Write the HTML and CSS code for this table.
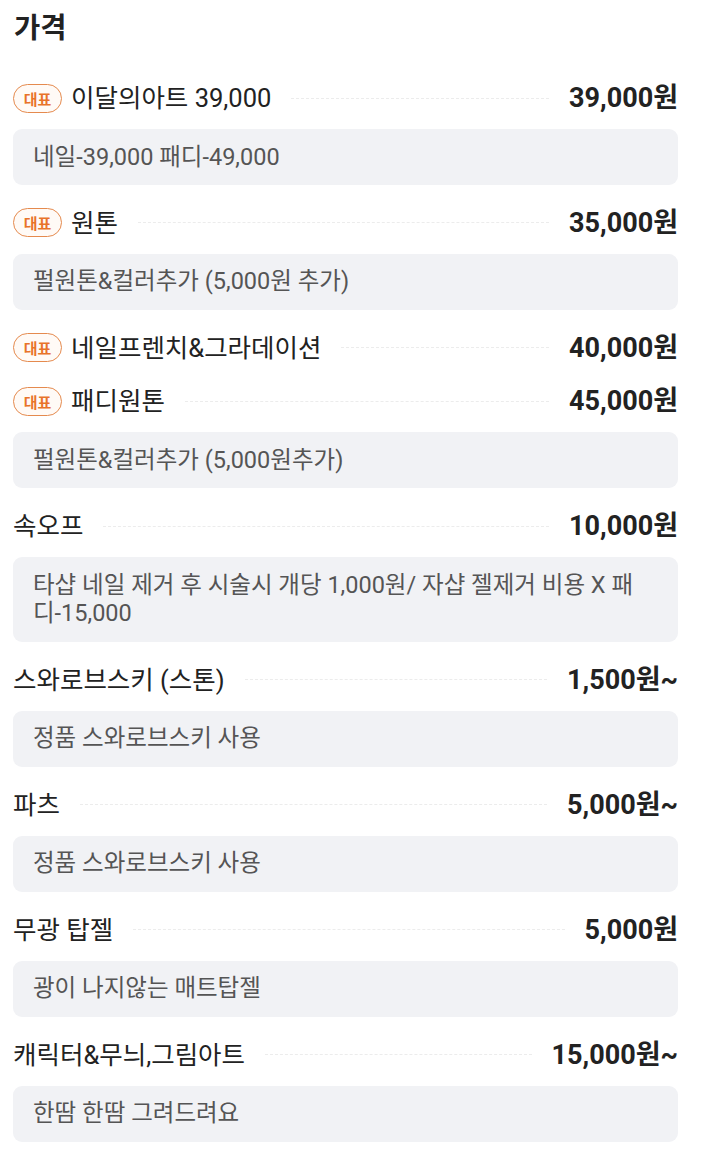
FILE: index.html
```html
<!DOCTYPE html>
<html lang="ko">
<head>
<meta charset="utf-8">
<title>가격</title>
<link rel="stylesheet" href="styles.css">
</head>
<body>
<section class="price-section">
  <h2 class="title">가격</h2>
  <ul class="items">
    <li class="item">
      <div class="row"><span class="badge">대표</span><span class="name">이달의아트 39,000</span><span class="dots"></span><span class="price">39,000원</span></div>
      <p class="desc">네일-39,000 패디-49,000</p>
    </li>
    <li class="item">
      <div class="row"><span class="badge">대표</span><span class="name">원톤</span><span class="dots"></span><span class="price">35,000원</span></div>
      <p class="desc">펄원톤&amp;컬러추가 (5,000원 추가)</p>
    </li>
    <li class="item">
      <div class="row"><span class="badge">대표</span><span class="name">네일프렌치&amp;그라데이션</span><span class="dots"></span><span class="price">40,000원</span></div>
    </li>
    <li class="item">
      <div class="row"><span class="badge">대표</span><span class="name">패디원톤</span><span class="dots"></span><span class="price">45,000원</span></div>
      <p class="desc">펄원톤&amp;컬러추가 (5,000원추가)</p>
    </li>
    <li class="item">
      <div class="row"><span class="name">속오프</span><span class="dots"></span><span class="price">10,000원</span></div>
      <p class="desc">타샵 네일 제거 후 시술시 개당 1,000원/ 자샵 젤제거 비용 X 패디-15,000</p>
    </li>
    <li class="item">
      <div class="row"><span class="name">스와로브스키 (스톤)</span><span class="dots"></span><span class="price">1,500원~</span></div>
      <p class="desc">정품 스와로브스키 사용</p>
    </li>
    <li class="item">
      <div class="row"><span class="name">파츠</span><span class="dots"></span><span class="price">5,000원~</span></div>
      <p class="desc">정품 스와로브스키 사용</p>
    </li>
    <li class="item">
      <div class="row"><span class="name">무광 탑젤</span><span class="dots"></span><span class="price">5,000원</span></div>
      <p class="desc">광이 나지않는 매트탑젤</p>
    </li>
    <li class="item">
      <div class="row"><span class="name">캐릭터&amp;무늬,그림아트</span><span class="dots"></span><span class="price">15,000원~</span></div>
      <p class="desc">한땀 한땀 그려드려요</p>
    </li>
  </ul>
</section>
</body>
</html>
```
FILE: styles.css
```css
* { box-sizing: border-box; }
html, body { margin: 0; padding: 0; background: #fff; }
body {
  font-family: Roboto, "Noto Sans CJK KR", sans-serif;
  color: #222;
}
.price-section {
  padding: 12px 23px 0 13px;
}
.title {
  margin: 0 0 37px 1px;
  font-size: 28.5px;
  line-height: 34px;
  font-weight: 700;
  color: #222;
}
.items {
  list-style: none;
  margin: 0;
  padding: 0;
  display: flex;
  flex-direction: column;
  gap: 23.2px;
}
.item {
  display: flex;
  flex-direction: column;
  gap: 16px;
}
.row {
  display: flex;
  align-items: center;
  height: 30px;
}
.badge {
  display: inline-flex;
  align-items: center;
  justify-content: center;
  width: 49px;
  height: 29px;
  margin-right: 9px;
  border: 1px solid #e58a4e;
  border-radius: 15px;
  background: #fffaf6;
  color: #e8732a;
  font-size: 15px;
  font-weight: 700;
  flex-shrink: 0;
}
.name {
  font-size: 25.5px;
  line-height: 30px;
  color: #222;
  white-space: nowrap;
}
.dots {
  flex: 1;
  margin: 0 20px;
  border-top: 1px dashed #ececec;
}
.price {
  font-size: 27px;
  line-height: 30px;
  font-weight: 700;
  color: #222;
  white-space: nowrap;
}
.desc {
  margin: 0;
  padding: 13.5px 20px 13.5px 20px;
  background: #f1f2f5;
  border-radius: 9px;
  font-size: 23.5px;
  line-height: 28.8px;
  color: #555;
}
```
